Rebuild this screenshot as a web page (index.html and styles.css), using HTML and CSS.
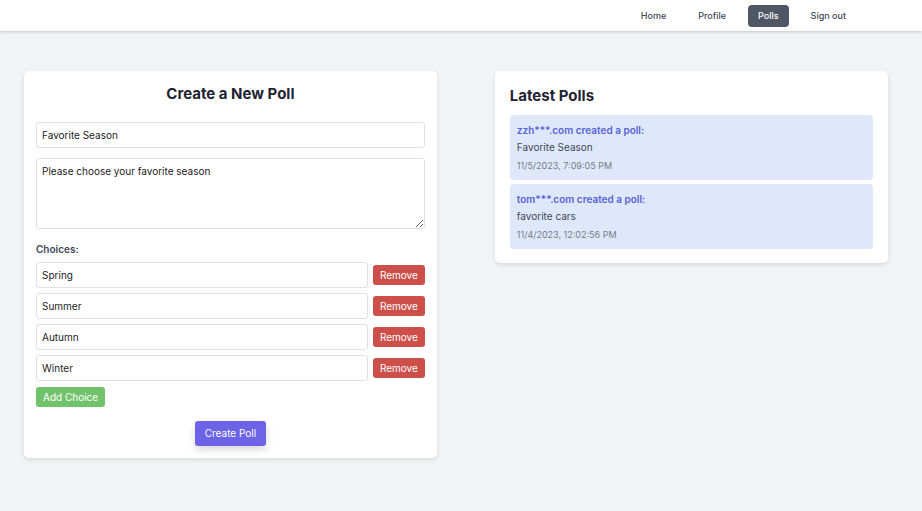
FILE: index.html
```html
<!DOCTYPE html>
<html lang="en">
<head>
<meta charset="utf-8">
<title>Polls</title>
<link rel="stylesheet" href="styles.css">
</head>
<body>
<header class="topbar">
  <nav class="nav">
    <a class="nav-link" href="#home">Home</a>
    <a class="nav-link" href="#profile">Profile</a>
    <a class="nav-link active" href="#polls" aria-current="page">Polls</a>
    <a class="nav-link" href="#signout">Sign out</a>
  </nav>
</header>
<main class="layout">
  <form class="card create">
    <h1 class="title create-title">Create a New Poll</h1>
    <input class="field" type="text" aria-label="Title" value="Favorite Season">
    <textarea class="field description" aria-label="Description">Please choose your favorite season</textarea>
    <fieldset class="choices">
      <legend class="choices-label">Choices:</legend>
      <div class="choice">
        <input class="field" type="text" aria-label="Choice 1" value="Spring">
        <button class="btn remove" type="button">Remove</button>
      </div>
      <div class="choice">
        <input class="field" type="text" aria-label="Choice 2" value="Summer">
        <button class="btn remove" type="button">Remove</button>
      </div>
      <div class="choice">
        <input class="field" type="text" aria-label="Choice 3" value="Autumn">
        <button class="btn remove" type="button">Remove</button>
      </div>
      <div class="choice">
        <input class="field" type="text" aria-label="Choice 4" value="Winter">
        <button class="btn remove" type="button">Remove</button>
      </div>
    </fieldset>
    <button class="btn add" type="button">Add Choice</button>
    <button class="btn submit" type="submit">Create Poll</button>
  </form>
  <section class="card latest">
    <h2 class="title latest-title">Latest Polls</h2>
    <ul class="polls">
      <li class="poll">
        <p class="author">zzh***.com created a poll:</p>
        <p class="name">Favorite Season</p>
        <p class="date">11/5/2023, 7:09:05 PM</p>
      </li>
      <li class="poll">
        <p class="author">tom***.com created a poll:</p>
        <p class="name">favorite cars</p>
        <p class="date">11/4/2023, 12:02:56 PM</p>
      </li>
    </ul>
  </section>
</main>
</body>
</html>
```

FILE: styles.css
```css
* {
  box-sizing: border-box;
  margin: 0;
  padding: 0;
}

body {
  min-height: 100vh;
  background: #f2f3f5;
  color: #1f2433;
  font-family: Inter, "Liberation Sans", sans-serif;
  font-size: 10px;
  line-height: 16px;
}

.topbar {
  background: #fff;
  box-shadow: 0 1px 3px rgba(0, 0, 0, 0.2);
}

.nav {
  display: flex;
  justify-content: flex-end;
  gap: 12px;
  padding: 5px 66px 4px 24px;
}

.nav-link {
  padding: 3px 10px;
  border-radius: 4px;
  color: #414755;
  font-size: 9px;
  font-weight: 500;
  text-decoration: none;
}

.nav-link.active {
  background: #4f5664;
  color: #fff;
}

.layout {
  display: grid;
  grid-template-columns: 21fr 20fr;
  gap: 58px;
  align-items: start;
  padding: 40px 34px 40px 24px;
}

.card {
  border-radius: 5px;
  background: #fff;
  box-shadow: 0 2px 4px rgba(0, 0, 0, 0.1);
}

.title {
  font-size: 15px;
  font-weight: 700;
  line-height: 20px;
}

.create {
  display: flex;
  flex-direction: column;
  padding: 13px 12px 12px;
}

.create-title {
  margin-bottom: 18px;
  text-align: center;
}

.field {
  width: 100%;
  height: 26px;
  padding: 4px 5px;
  border: 1px solid #dfe1e5;
  border-radius: 3px;
  background: #fff;
  color: #1b1b1d;
  font: inherit;
}

.description {
  height: 71px;
  margin: 10px 0 12px;
  resize: vertical;
}

.choices {
  display: grid;
  gap: 5px;
  border: 0;
}

.choices-label {
  margin-bottom: 5px;
  color: #414755;
  font-weight: 600;
}

.choice {
  display: flex;
  align-items: center;
  gap: 5px;
}

.btn {
  flex: none;
  padding: 2px 7px;
  border: 0;
  border-radius: 3px;
  color: #fff;
  font: inherit;
}

.remove {
  background: #cd4f4a;
}

.add {
  align-self: flex-start;
  margin: 6px 0 14px;
  background: #70c36b;
}

.submit {
  align-self: center;
  padding: 5px 10px;
  background: #6c63e6;
  line-height: 15px;
  box-shadow: 0 4px 8px rgba(0, 0, 0, 0.15);
}

.latest {
  padding: 15px 15px 14px;
}

.latest-title {
  margin-bottom: 9px;
}

.polls {
  display: grid;
  gap: 4px;
  list-style: none;
}

.poll {
  padding: 7px;
  border-radius: 4px;
  background: #dfe8fb;
}

.author {
  color: #5762d6;
  font-weight: 600;
}

.name {
  margin: 1px 0 3px;
  color: #414755;
}

.date {
  color: #747b89;
  font-size: 9px;
  line-height: 15px;
}
```
